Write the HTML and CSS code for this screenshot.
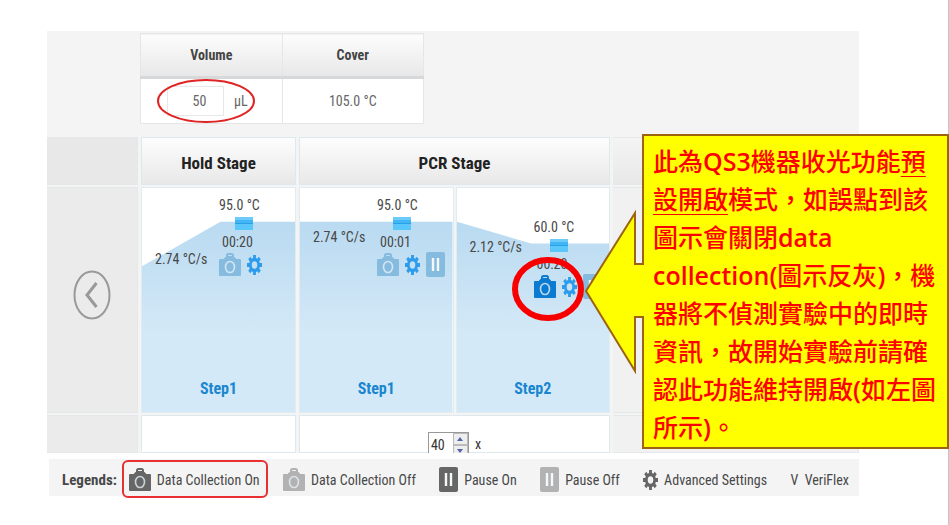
FILE: index.html
```html
<!DOCTYPE html>
<html lang="zh-Hant">
<head>
<meta charset="utf-8">
<title>PCR Method</title>
<link rel="stylesheet" href="styles.css">
</head>
<body>
<svg class="sprite" aria-hidden="true">
  <symbol id="camera" viewBox="0 0 22 23" preserveAspectRatio="none">
    <path fill="currentColor" d="M1 6H21Q22 6 22 7V22Q22 23 21 23H1Q0 23 0 22V7Q0 6 1 6Z"/>
    <path fill="none" stroke="currentColor" stroke-width="2" d="M6 7V6L8 4V2.500Q8 1 9.500 1H12.500Q14 1 14 2.500V4L16 6V7M8 4H14"/>
    <path fill="currentColor" d="M6 7L8 4H14L16 7Z"/>
    <ellipse cx="11" cy="14" rx="4.500" ry="5.500" fill="none" stroke="#e6f0f8" stroke-opacity=".8" stroke-width="1.600"/>
  </symbol>
  <symbol id="gear" viewBox="0 0 20 20" preserveAspectRatio="none">
    <circle cx="10" cy="10" r="5.500" fill="none" stroke="currentColor" stroke-width="3.600"/>
    <path stroke="currentColor" stroke-width="3.800" d="M10 0V4M10 16V20M0 10H4M16 10H20M3 3L5.500 5.500M14.500 14.500L17 17M3 17L5.500 14.500M14.500 5.500L17 3"/>
  </symbol>
  <symbol id="pause" viewBox="0 0 19 25" preserveAspectRatio="none">
    <rect width="19" height="25" rx="2" fill="currentColor"/>
    <path stroke="#f4f8fb" stroke-width="2.400" d="M7 6V19M12 6V19"/>
  </symbol>
</svg>

<main class="page">
  <section class="panel">
    <table class="setup">
      <thead><tr><th scope="col"><label for="volume">Volume</label></th><th scope="col">Cover</th></tr></thead>
      <tbody><tr>
        <td><div class="volume"><input id="volume" type="text" value="50"><span>µL</span>
          <svg class="mark-volume" viewBox="0 0 98 46"><ellipse cx="49" cy="23" rx="48" ry="21"/></svg></div></td>
        <td>105.0 °C</td>
      </tr></tbody>
    </table>

    <div class="stages">
      <div class="side head"></div>
      <h2 class="head">Hold Stage</h2>
      <h2 class="head">PCR Stage</h2>
      <div class="side head right"></div>

      <div class="side back"><button class="prev" type="button" aria-label="Previous"><svg viewBox="0 0 38 50" preserveAspectRatio="none"><ellipse cx="19" cy="25" rx="17.500" ry="23.500"/><path class="arrow" d="M23.500 13L14 25L23.500 37"/></svg></button></div>

      <div class="steps">
        <article class="step">
          <svg class="plot" viewBox="0 0 154 226" preserveAspectRatio="none"><defs><linearGradient id="sky" x1="0" y1="0" x2="0" y2="1"><stop offset="0" stop-color="#b9daf1"/><stop offset=".6" stop-color="#d4e9f7"/></linearGradient></defs><path fill="url(#sky)" d="M0 79L79 34H154V226H0Z"/></svg>
          <div class="values">
            <span class="rate rise">2.74 °C/s</span>
            <div class="hold"><span>95.0 °C</span><i class="handle"></i><span class="time">00:20</span>
              <div class="tools"><button class="faded" type="button" aria-label="Data collection"><svg class="camera"><use href="#camera"/></svg></button><button type="button" aria-label="Settings"><svg class="gear"><use href="#gear"/></svg></button></div></div>
          </div>
          <h3>Step1</h3>
        </article>
      </div>

      <div class="steps">
        <article class="step">
          <svg class="plot" viewBox="0 0 154 226" preserveAspectRatio="none"><path fill="url(#sky)" d="M0 34H154V226H0Z"/></svg>
          <div class="values">
            <span class="rate">2.74 °C/s</span>
            <div class="hold"><span>95.0 °C</span><i class="handle"></i><span class="time">00:01</span>
              <div class="tools"><button class="faded" type="button" aria-label="Data collection"><svg class="camera"><use href="#camera"/></svg></button><button type="button" aria-label="Settings"><svg class="gear"><use href="#gear"/></svg></button><button class="faded" type="button" aria-label="Pause"><svg class="pause"><use href="#pause"/></svg></button></div></div>
          </div>
          <h3>Step1</h3>
        </article>
        <article class="step">
          <svg class="plot" viewBox="0 0 154 226" preserveAspectRatio="none"><path fill="url(#sky)" d="M0 34L75 56H154V226H0Z"/></svg>
          <div class="values cool">
            <span class="rate fall">2.12 °C/s</span>
            <div class="hold"><span>60.0 °C</span><i class="handle"></i><span class="time">00:20</span>
              <div class="tools"><button class="active" type="button" aria-label="Data collection"><svg class="camera"><use href="#camera"/></svg></button><button type="button" aria-label="Settings"><svg class="gear"><use href="#gear"/></svg></button><button class="faded" type="button" aria-label="Pause"><svg class="pause"><use href="#pause"/></svg></button>
                <svg class="mark-camera" viewBox="0 0 74 64"><ellipse cx="37" cy="32" rx="33" ry="29"/></svg></div></div>
          </div>
          <h3>Step2</h3>
        </article>
      </div>
      <div class="side right"></div>

      <div class="side foot"></div>
      <div class="cell foot"></div>
      <div class="cell foot"><div class="cycles">
        <div class="spinner"><input id="cycles" type="text" value="40" aria-label="Cycles"><div class="arrows"><button type="button" aria-label="More"><svg viewBox="0 0 6 4"><path d="M0 4L3 0L6 4Z"/></svg></button><button type="button" aria-label="Fewer"><svg viewBox="0 0 6 4"><path d="M0 0L3 4L6 0Z"/></svg></button></div></div>
        <label for="cycles">x</label></div></div>
      <div class="side foot right"></div>
    </div>
  </section>

  <footer class="legends">
    <div class="group"><strong>Legends:</strong>
    <span class="item marked"><svg class="camera"><use href="#camera"/></svg>Data Collection On</span></div>
    <span class="item"><svg class="camera off"><use href="#camera"/></svg>Data Collection Off</span>
    <span class="item"><svg class="pause"><use href="#pause"/></svg>Pause On</span>
    <span class="item"><svg class="pause off"><use href="#pause"/></svg>Pause Off</span>
    <span class="item"><svg class="gear"><use href="#gear"/></svg>Advanced Settings</span>
    <span class="item">V&nbsp; VeriFlex</span>
  </footer>

  <aside class="callout">
    <p>此為<b>QS3</b>機器收光功能<u>預<br>設開啟</u>模式，如誤點到該<br>圖示會關閉<b>data</b><br><b>collection(</b>圖示反灰<b>)</b>，機<br>器將不偵測實驗中的即時<br>資訊，故開始實驗前請確<br>認此功能維持開啟<b>(</b>如左圖<br>所示<b>)</b>。</p>
    <svg class="pointer" viewBox="0 0 60 164"><path d="M60 54H51V3L2 81L51 161V107H60"/></svg>
  </aside>
</main>
</body>
</html>
```
FILE: styles.css
```css
* { box-sizing: border-box; }
body {
  margin: 0;
  background: #fff;
  color: #484848;
  font: 14px/20px "Roboto Condensed", "Liberation Sans Narrow", Roboto, sans-serif;
}
button { padding: 0; border: 0; background: none; color: inherit; }
input { font: inherit; color: inherit; }
svg { display: block; }
.sprite { position: absolute; width: 0; height: 0; }
.page {
  position: relative;
  min-height: 525px;
  padding: 31px 89px 0 47px;
  border-right: 1px solid #c4c4c4;
}

.panel { height: 422px; padding-top: 2px; background: #f4f4f4; overflow: hidden; }
.setup {
  width: 284px;
  margin-left: 93px;
  border-collapse: collapse;
  table-layout: fixed;
  text-align: center;
  background: #fff;
}
.setup th, .setup td { padding: 0; border: 1px solid #e6e6e6; }
.setup th {
  height: 44px;
  border-bottom: 3px solid #d6d8da;
  background: linear-gradient(#fdfdfd, #e8e8e8);
  color: #444;
}
.setup td { height: 46px; color: #666; }
.volume { position: relative; display: flex; align-items: center; gap: 10px; padding-left: 26px; }
.volume input {
  width: 57px;
  height: 30px;
  padding: 0 0 0 8px;
  border: 1px solid #e8e8e8;
  text-align: center;
}
.mark-volume { position: absolute; left: 16px; top: -8px; width: 98px; height: 46px; }
.mark-volume ellipse { fill: none; stroke: #df2424; stroke-width: 2; }

.stages {
  display: grid;
  grid-template-columns: 91fr 155fr 311fr 246fr;
  grid-template-rows: 48px 226px 38px;
  column-gap: 3px;
  row-gap: 2px;
  margin-top: 13px;
}
.head {
  display: grid;
  place-items: center;
  margin: 0;
  padding-top: 4px;
  border: 1px solid #dde9ee;
  background: linear-gradient(#fdfdfd, #e8e8e8);
  color: #222;
  font-size: 17px;
}
.side { border: 1px solid #e5e8e8; border-left: 0; background: #ebebeb; }
.side.right { background: #f1f1f1; }
.side.head { background: #e8e8e8; }
.side.head.right { background: linear-gradient(#f4f4f4, #e8e8e8); }
.back { display: grid; place-items: center; padding-bottom: 10px; }
.prev { width: 38px; height: 50px; }
.prev svg { width: 38px; height: 50px; fill: none; stroke: #999; stroke-width: 2; }
.prev .arrow { stroke-width: 3; }
.steps { display: flex; gap: 2px; }
.step {
  position: relative;
  flex: 1;
  display: flex;
  flex-direction: column;
  border: 1px solid #dfedf3;
  background: #fff;
}
.plot { position: absolute; left: 0; top: 0; width: 100%; height: 100%; }
.values { position: relative; display: grid; grid-template-columns: 77px 1fr; padding-top: 7px; }
.cool { padding-top: 29px; }
.rate { padding: 32px 0 0 13px; white-space: nowrap; }
.rise { padding-top: 54px; }
.fall { padding-top: 20px; }
.hold { display: flex; flex-direction: column; align-items: flex-start; }
.handle {
  width: 18px;
  height: 13px;
  margin: 2px 0 2px 16px;
  background: linear-gradient(#6ccbfa 0 3px, #42b5f4 3px 6px, #2aa0e6 6px 7px, #5bc6fa 7px);
}
.time { margin-left: 3px; }
.tools { position: relative; display: flex; align-items: center; gap: 6px; height: 25px; color: #2d9cec; }
.faded { color: #86bbe0; }
.active { color: #0b7ad1; }
.camera { width: 22px; height: 23px; }
.gear { width: 15px; height: 20px; }
.pause { width: 19px; height: 25px; }
.mark-camera { position: absolute; left: -23px; top: -17px; width: 74px; height: 64px; }
.mark-camera ellipse { fill: none; stroke: #f90000; stroke-width: 6; }
.step h3 {
  position: relative;
  margin: auto 0 13px;
  color: #1a86d0;
  font-size: 16px;
  text-align: center;
}
.cell { border: 1px solid #dde9ee; background: #fff; }
.cycles { display: flex; align-items: flex-start; justify-content: center; gap: 6px; padding-top: 16px; color: #333; line-height: 16px; }
.spinner { display: flex; height: 26px; border: 1px solid #999; background: #fff; }
.spinner input { width: 24px; padding: 0 0 0 2px; border: 0; }
.arrows { width: 15px; }
.arrows button { display: grid; place-items: center; width: 15px; height: 12px; border: 1px solid #bbb; background: #eee; }
.arrows svg { width: 6px; height: 4px; fill: #5564a8; }
.cycles label { padding-top: 4px; }

.legends {
  display: flex;
  align-items: center;
  justify-content: space-between;
  height: 37px;
  margin: 6px 0 0 2px;
  padding: 4px 10px 0 13px;
  background: #f4f4f4;
  white-space: nowrap;
}
.legends strong { font-size: 15px; }
.group, .item { display: flex; align-items: center; }
.group { gap: 12px; }
.item { position: relative; gap: 6px; }
.item svg { color: #666; }
.item .off { color: #b2b2b2; }
.marked::after {
  content: "";
  position: absolute;
  inset: -8px -8px -7px -7px;
  border: 2px solid #e83030;
  border-radius: 6px;
}

.callout {
  position: absolute;
  right: -1px;
  top: 134px;
  width: 307px;
  height: 315px;
  padding: 6px 0 0 9px;
  border: 2px solid #9c6410;
  background: #ff0;
}
.callout p {
  margin: 0;
  color: #f00;
  font: 500 25px/38px "Open Sans", "Noto Sans CJK TC", sans-serif;
  white-space: nowrap;
}
.callout b { font-weight: 600; }
.callout u { text-decoration-thickness: 1px; text-underline-offset: 5px; }
.pointer { position: absolute; left: -60px; top: 74px; width: 60px; height: 164px; }
.pointer path { fill: #ff0; stroke: #9c6410; stroke-width: 2; }
```
